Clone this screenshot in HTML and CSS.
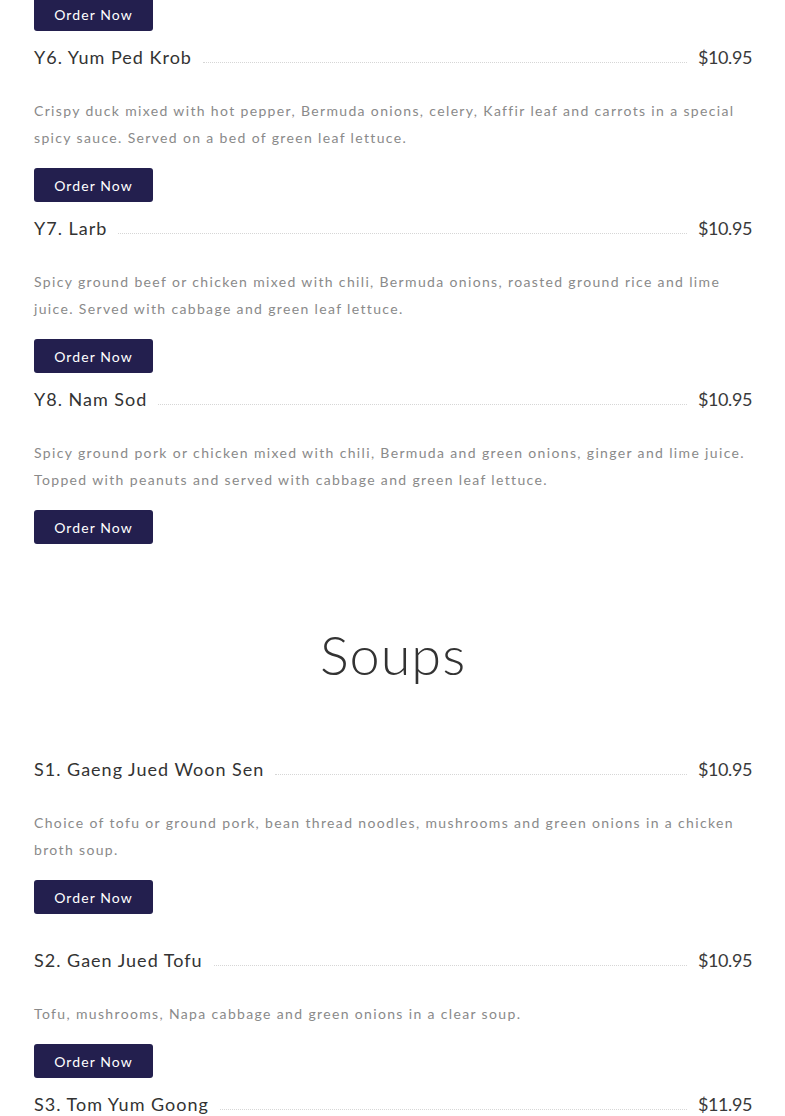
FILE: index.html
```html
<!DOCTYPE html>
<html lang="en">
<head>
<meta charset="utf-8">
<title>Menu</title>
<link rel="stylesheet" href="styles.css">
</head>
<body>
<div class="menu">
  <a class="order-btn order-btn--top" href="#">Order Now</a>

  <div class="item">
    <div class="item-head"><span class="item-name">Y6. Yum Ped Krob</span><span class="dots"></span><span class="item-price">$10.95</span></div>
    <p class="item-desc">Crispy duck mixed with hot pepper, Bermuda onions, celery, Kaffir leaf and carrots in a special spicy sauce. Served on a bed of green leaf lettuce.</p>
    <a class="order-btn" href="#">Order Now</a>
  </div>

  <div class="item">
    <div class="item-head"><span class="item-name">Y7. Larb</span><span class="dots"></span><span class="item-price">$10.95</span></div>
    <p class="item-desc">Spicy ground beef or chicken mixed with chili, Bermuda onions, roasted ground rice and lime juice. Served with cabbage and green leaf lettuce.</p>
    <a class="order-btn" href="#">Order Now</a>
  </div>

  <div class="item">
    <div class="item-head"><span class="item-name">Y8. Nam Sod</span><span class="dots"></span><span class="item-price">$10.95</span></div>
    <p class="item-desc">Spicy ground pork or chicken mixed with chili, Bermuda and green onions, ginger and lime juice. Topped with peanuts and served with cabbage and green leaf lettuce.</p>
    <a class="order-btn" href="#">Order Now</a>
  </div>

  <h2 class="section-title">Soups</h2>

  <div class="item item--spaced">
    <div class="item-head"><span class="item-name">S1. Gaeng Jued Woon Sen</span><span class="dots"></span><span class="item-price">$10.95</span></div>
    <p class="item-desc">Choice of tofu or ground pork, bean thread noodles, mushrooms and green onions in a chicken broth soup.</p>
    <a class="order-btn" href="#">Order Now</a>
  </div>

  <div class="item">
    <div class="item-head"><span class="item-name">S2. Gaen Jued Tofu</span><span class="dots"></span><span class="item-price">$10.95</span></div>
    <p class="item-desc">Tofu, mushrooms, Napa cabbage and green onions in a clear soup.</p>
    <a class="order-btn" href="#">Order Now</a>
  </div>

  <div class="item">
    <div class="item-head"><span class="item-name">S3. Tom Yum Goong</span><span class="dots"></span><span class="item-price">$11.95</span></div>
  </div>
</div>
</body>
</html>
```

FILE: styles.css
```css
html, body {
  margin: 0;
  padding: 0;
  background: #ffffff;
}

body {
  font-family: "Lato", "Open Sans", sans-serif;
  color: #333333;
}

.menu {
  padding: 0 33px 0 34px;
  display: flex;
  flex-direction: column;
  align-items: stretch;
}

.order-btn {
  display: inline-flex;
  align-items: center;
  justify-content: center;
  align-self: flex-start;
  width: 119px;
  height: 34px;
  box-sizing: border-box;
  background: #231f4e;
  color: #ffffff;
  font-size: 14px;
  letter-spacing: 1.1px;
  text-decoration: none;
  border-radius: 3px;
}

.order-btn--top {
  margin-top: -3px;
}

.item {
  display: flex;
  flex-direction: column;
  padding-top: 13px;
}

.item--spaced {
  margin-bottom: 20px;
}

.item-head {
  display: flex;
  align-items: baseline;
  height: 26px;
  line-height: 26px;
  font-size: 18px;
  letter-spacing: 1px;
  color: #333333;
}

.item-name {
  white-space: nowrap;
}

.dots {
  flex: 1;
  margin: 0 11px;
  border-bottom: 1px dotted #d6d6d6;
  transform: translateY(-1px);
}

.item-price {
  letter-spacing: -0.4px;
  white-space: nowrap;
  color: #3a3a3a;
}

.item-desc {
  margin: 27px 0 17px;
  font-size: 14px;
  line-height: 27px;
  letter-spacing: 1.35px;
  color: #8a8a8a;
}

.section-title {
  margin: 78px 0 56px;
  text-align: center;
  font-size: 54px;
  line-height: 65px;
  font-weight: 300;
  letter-spacing: 1px;
  color: #333333;
}
```
